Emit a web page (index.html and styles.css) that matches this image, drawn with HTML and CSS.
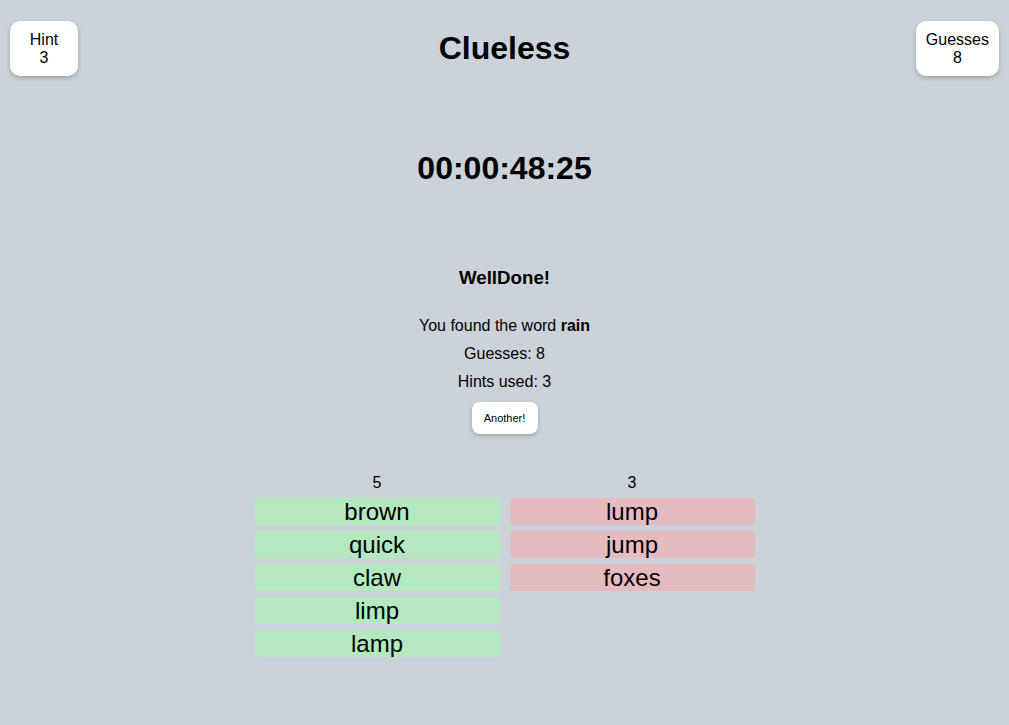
FILE: index.html
```html
<!DOCTYPE html>
<html>
<head>
<meta charset="utf-8">
<link rel="stylesheet" href="styles.css">
</head>
<body>
<div class="page">
  <header class="header">
    <div class="stat-box left">Hint<br>3</div>
    <h1 class="title">Clueless</h1>
    <div class="stat-box right">Guesses<br>8</div>
  </header>
  <div class="timer">00:00:48:25</div>
  <section class="result">
    <h3 class="result-title">WellDone!</h3>
    <p class="result-line">You found the word <b>rain</b></p>
    <p class="result-line">Guesses: 8</p>
    <p class="result-line">Hints used: 3</p>
    <button class="another">Another!</button>
  </section>
  <section class="columns">
    <div class="column">
      <div class="count">5</div>
      <div class="word good">brown</div>
      <div class="word good">quick</div>
      <div class="word good">claw</div>
      <div class="word good">limp</div>
      <div class="word good">lamp</div>
    </div>
    <div class="column">
      <div class="count">3</div>
      <div class="word bad">lump</div>
      <div class="word bad">jump</div>
      <div class="word bad">foxes</div>
    </div>
  </section>
</div>
</body>
</html>
```
FILE: styles.css
```css
html, body {
  margin: 0;
  padding: 0;
  height: 100%;
}
body {
  background: #cbd2d9;
  font-family: "Liberation Sans", Arial, sans-serif;
  color: #000;
}
.page {
  display: flex;
  flex-direction: column;
  align-items: center;
}
.header {
  align-self: stretch;
  display: grid;
  grid-template-columns: 1fr auto 1fr;
  align-items: center;
  padding: 21px 10px 0 10px;
}
.stat-box {
  background: #fff;
  border-radius: 10px;
  box-shadow: 0 2px 4px rgba(0, 0, 0, 0.22);
  font-size: 16px;
  line-height: 18px;
  text-align: center;
  padding: 9.5px 10px;
  min-width: 68px;
  box-sizing: border-box;
}
.left {
  justify-self: start;
}
.right {
  justify-self: end;
}
.title {
  margin: 0;
  font-size: 32px;
  font-weight: bold;
  line-height: 37px;
}
.timer {
  margin-top: 74px;
  font-size: 32px;
  font-weight: bold;
  line-height: 37px;
}
.result {
  margin-top: 80px;
  display: flex;
  flex-direction: column;
  align-items: center;
}
.result-title {
  margin: 0 0 23px 0;
  font-size: 18.72px;
  line-height: 22px;
  font-weight: bold;
}
.result-line {
  margin: 0;
  font-size: 16px;
  line-height: 28px;
}
.another {
  margin-top: 6px;
  width: 66px;
  height: 32px;
  border: none;
  border-radius: 8px;
  background: #fff;
  box-shadow: 0 2px 4px rgba(0, 0, 0, 0.22);
  font-family: "Liberation Sans", Arial, sans-serif;
  font-size: 11px;
  color: #000;
  padding: 0;
}
.columns {
  margin-top: 39px;
  display: flex;
  gap: 10px;
}
.column {
  width: 245px;
  display: flex;
  flex-direction: column;
  gap: 6px;
}
.count {
  font-size: 16px;
  line-height: 18px;
  text-align: center;
  margin-top: 1px;
}
.word {
  height: 27px;
  line-height: 27px;
  font-size: 24px;
  text-align: center;
  border-radius: 4px;
}
.good {
  background: #b4e9c0;
}
.bad {
  background: #e6bbc0;
}
```
